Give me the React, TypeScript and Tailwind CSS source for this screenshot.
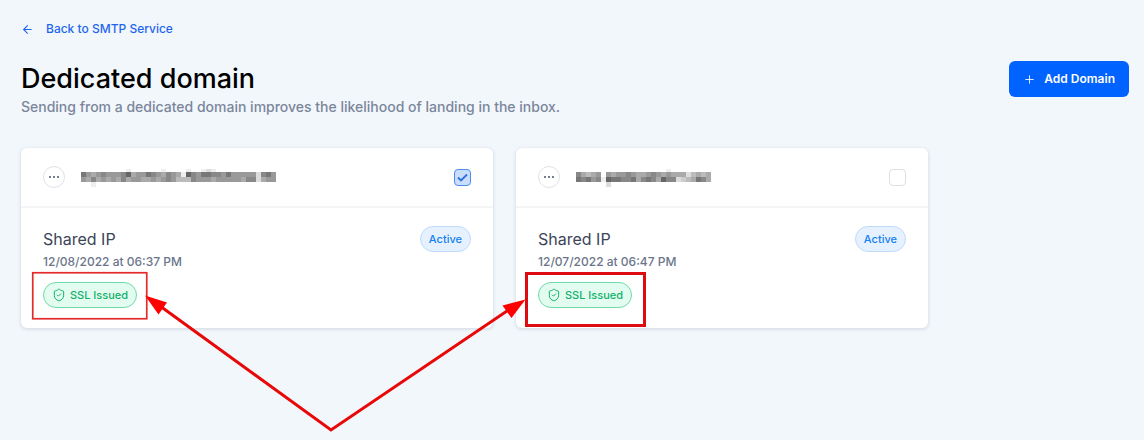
import { useState } from 'react';
import { ArrowLeft, Plus, ShieldCheck } from 'lucide-react';

interface Domain {
  id: string;
  createdAt: string;
  primary: boolean;
  /** Redacted name as gray levels, one hex digit per 5px block ('.' = empty) */
  mask: string[];
}

const DOMAINS: Domain[] = [
  {
    id: 'domain-1',
    createdAt: '12/08/2022 at 06:37 PM',
    primary: true,
    mask: [
      '.........ef....fe...fe..ede.ff.........',
      '79a9899986a99789a89ae68977889799999d879',
      '9a8a9a9a8a99aa9a989bbb8999a99999a88da99',
      '..e....................................',
    ],
  },
  {
    id: 'domain-2',
    createdAt: '12/07/2022 at 06:47 PM',
    primary: false,
    mask: [
      '.............ff...ef.......',
      '8aba9f9a9989aa989a9aaadbaba',
      '78798e677887a878a688dcba78a',
      '.....fd....................',
    ],
  },
];

function MaskedName({ rows, label }: { rows: string[]; label: string }) {
  const width = rows[0].length * 5;

  return (
    <svg width={width} height={20} viewBox={`0 0 ${width} 20`} shapeRendering="crispEdges" role="img" aria-label={label}>
      {rows.map((row, y) =>
        row.split('').map((level, x) =>
          level === '.' ? null : (
            <rect
              key={`${x}-${y}`}
              x={x * 5}
              y={y === 0 ? 2 : y * 5}
              width={5}
              height={y === 0 ? 3 : 5}
              fill={`#${level}${level}${level}`}
            />
          ),
        ),
      )}
    </svg>
  );
}

function DomainCard({ domain }: { domain: Domain }) {
  const [checked, setChecked] = useState(domain.primary);

  return (
    <article className="rounded-md bg-white shadow-[0_1px_3px_1px_rgba(100,116,139,0.16)]">
      <header className="flex h-15 items-center border-b-2 border-[#f3f5f7] px-[22px]">
        <button
          type="button"
          aria-label="Domain options"
          className="mr-4 flex size-[22px] items-center justify-center gap-[2px] rounded-full border border-[#dfe2e9]"
        >
          <span className="size-[2px] rounded-full bg-[#4b5568]" />
          <span className="size-[2px] rounded-full bg-[#4b5568]" />
          <span className="size-[2px] rounded-full bg-[#4b5568]" />
        </button>
        <MaskedName rows={domain.mask} label="Hidden domain name" />
        <label className="relative ml-auto flex pl-[178px]">
          <input
            type="checkbox"
            aria-label="Primary domain"
            checked={checked}
            onChange={e => setChecked(e.target.checked)}
            className="size-[17px] appearance-none rounded border border-[#dcdfe5] bg-white checked:border-[#4d8df0] checked:bg-[#c9defc]"
          />
          {checked && (
            <svg className="pointer-events-none absolute right-0 size-[17px]" viewBox="0 0 17 17" fill="none">
              <path d="M4 8.5L7 11.5L13 5.5" stroke="#2b6fe0" strokeWidth="1.8" />
            </svg>
          )}
        </label>
      </header>

      <div className="flex items-start justify-between px-[22px] pt-[18px] pb-5">
        <div>
          <h2 className="text-[16px] leading-[26px] text-[#3b4558]">Shared IP</h2>
          <p className="text-[12px] leading-5 font-medium text-[#6b758a]">{domain.createdAt}</p>
          <span className="mt-[10px] flex h-[26px] w-fit items-center gap-1 rounded-full border border-[#6edca9] bg-[#e2fcef] px-2 text-[11px] font-medium text-[#12b06b]">
            <ShieldCheck size={14} strokeWidth={1.7} />
            SSL Issued
          </span>
        </div>
        <span className="flex h-[26px] items-center rounded-full border border-[#bfdbfb] bg-[#e5f1ff] px-2 text-[11px] font-medium text-[#1580f0]">
          Active
        </span>
      </div>
    </article>
  );
}

function Callouts() {
  return (
    <svg className="pointer-events-none absolute top-0 left-0" width="660" height="440" viewBox="0 0 660 440" fill="none">
      <rect x="32.75" y="272.75" width="114" height="46" stroke="#e52a2a" strokeWidth="1.7" />
      <rect x="526.5" y="273.5" width="118" height="52" stroke="#dc0c10" strokeWidth="3" />
      <path d="M160 306L331 430L510 309" stroke="#e80808" strokeWidth="3" />
      <path d="M145 295.500L167 302.500L158.500 314.500Z" fill="#ff0000" />
      <path d="M525.500 299.500L511.500 318L502.500 305.500Z" fill="#ff0000" />
    </svg>
  );
}

export default function App() {
  return (
    <div className="relative min-h-screen bg-[#f2f7fc] font-['Inter',sans-serif]">
      <main className="pt-5 pr-[15px] pb-10 pl-[21px]">
        <a href="#smtp" className="flex w-fit items-center gap-3 text-[12px] leading-[18px] font-medium text-[#1f66ee]">
          <ArrowLeft size={13} strokeWidth={2} />
          Back to SMTP Service
        </a>

        <div className="mt-[23px] flex items-start justify-between">
          <div>
            <h1 className="text-[27px] leading-9 font-medium text-black">Dedicated domain</h1>
            <p className="text-[14px] leading-5 font-medium text-[#7b869b]">
              Sending from a dedicated domain improves the likelihood of landing in the inbox.
            </p>
          </div>
          <button
            type="button"
            className="flex h-9 items-center gap-2 rounded-md bg-[#0062ff] px-[14px] text-[12px] font-semibold text-white"
          >
            <Plus size={13} strokeWidth={1.6} />
            Add Domain
          </button>
        </div>

        <section className="mt-[31px] flex flex-wrap items-start gap-[23px]">
          {DOMAINS.map(domain => (
            <DomainCard key={domain.id} domain={domain} />
          ))}
        </section>
      </main>
      <Callouts />
    </div>
  );
}
